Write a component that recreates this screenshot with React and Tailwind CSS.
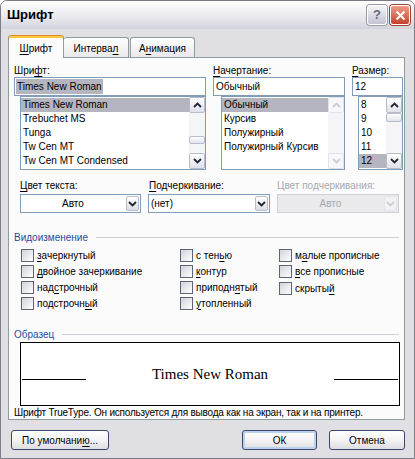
import React from "react";

// accelerator letter
function U({ children }) {
  return <span className="underline decoration-1 underline-offset-[2px]">{children}</span>;
}

function Arrow({ up, dim }) {
  return (
    <svg width="9" height="6" viewBox="0 0 9 6" className="block">
      <polyline
        points={up ? "1,5 4.5,1.5 8,5" : "1,1 4.5,4.5 8,1"}
        fill="none"
        stroke={dim ? "#cdcdd4" : "#23232e"}
        strokeWidth="1.8"
      />
    </svg>
  );
}

function ScrollBtn({ up, dim }) {
  return (
    <div
      className={`h-[16px] rounded-[2px] border flex items-center justify-center ${
        dim
          ? "border-[#e2e2ea] bg-[#f7f7f9]"
          : "border-[#b8bbca] bg-gradient-to-b from-white to-[#e0e0e9]"
      }`}
    >
      <Arrow up={up} dim={dim} />
    </div>
  );
}

function ScrollBar({ thumb, dim }) {
  return (
    <div className="w-[16px] flex flex-col bg-[#f5f5f8]">
      <ScrollBtn up dim={dim} />
      <div className="flex-1">
        {thumb === "mid" && (
          <div className="mt-[23px] h-[8px] rounded-[2px] border border-[#b8bbca] bg-gradient-to-b from-white to-[#e2e2ea]" />
        )}
        {thumb === "top" && (
          <div className="h-[9px] rounded-[2px] border border-[#b8bbca] bg-gradient-to-b from-white to-[#e2e2ea]" />
        )}
      </div>
      <ScrollBtn dim={dim} />
    </div>
  );
}

function ListBox({ items, selected, className, thumb, dim }) {
  return (
    <div className={`h-[74px] border border-[#7f9db9] bg-white flex overflow-hidden ${className}`}>
      <div className="flex-1 min-w-0 pt-px">
        {items.map((it, i) => (
          <div
            key={it}
            className={`h-[14px] leading-[14px] pl-[2px] whitespace-nowrap ${
              i === selected ? "bg-[#b5b5bf]" : ""
            }`}
          >
            {it}
          </div>
        ))}
      </div>
      <ScrollBar thumb={thumb} dim={dim} />
    </div>
  );
}

function Combo({ value, center, disabled, className }) {
  return (
    <div
      className={`h-[19px] border flex items-stretch ${
        disabled ? "border-[#cfcfd6] bg-[#eaeaed]" : "border-[#7f9db9] bg-white"
      } ${className}`}
    >
      <div
        className={`flex-1 flex items-center ${center ? "justify-center" : "pl-[2px]"} ${
          disabled ? "text-[#a8a8b0]" : ""
        }`}
      >
        {value}
      </div>
      <div className="w-[15px] p-px">
        <div
          className={`h-full rounded-[2px] border flex items-center justify-center ${
            disabled
              ? "border-[#e4e4ea] bg-[#f2f2f5]"
              : "border-[#b8bbca] bg-gradient-to-b from-white to-[#dcdce6]"
          }`}
        >
          <Arrow dim={disabled} />
        </div>
      </div>
    </div>
  );
}

function Check({ children }) {
  return (
    <div className="h-[16px] flex items-center">
      <div className="w-[13px] h-[13px] border border-[#5c6478] bg-gradient-to-br from-[#d4d4d9] to-white" />
      <span className="ml-[3px] whitespace-nowrap">{children}</span>
    </div>
  );
}

function Group({ title }) {
  return (
    <div className="flex items-center h-[13px] pl-[5px] pr-[5px]">
      <span className="text-[#1f4b9e] whitespace-nowrap">{title}</span>
      <div className="flex-1 h-px bg-[#d0d0d6] ml-[8px]" />
    </div>
  );
}

function Button({ children, def, className }) {
  return (
    <div
      className={`h-[20px] rounded-[3px] border border-[#3a4a66] bg-gradient-to-b from-white via-[#f4f4f6] to-[#dcdce2] flex items-center justify-center ${
        def ? "shadow-[inset_0_0_0_2px_#bcd0f0]" : ""
      } ${className}`}
    >
      {children}
    </div>
  );
}

export default function App() {
  return (
    <div className="w-[415px] h-[459px] overflow-hidden rounded-t-[7px] border border-[#7c7c88] bg-[#e0dfe3] font-['Liberation_Sans',Arial,sans-serif] text-[10px] text-black flex flex-col">
      {/* Title bar */}
      <div className="h-[28px] shrink-0 flex items-center pl-[6px] pr-[4px] bg-gradient-to-b from-white via-[#ececf0] to-[#d3d3dc]">
        <span className="font-bold text-[13px] flex-1">Шрифт</span>
        <div className="w-[20px] h-[20px] rounded-[3px] border border-white shadow-[0_0_0_1px_#9a9aa8] bg-gradient-to-b from-[#f4f4f8] to-[#c4c4d2] flex items-center justify-center text-[#6a6a80] font-bold text-[13px]">
          ?
        </div>
        <div className="ml-[3px] w-[20px] h-[20px] rounded-[3px] border border-white shadow-[0_0_0_1px_#a04030] bg-gradient-to-b from-[#ec9c88] to-[#c4402c] flex items-center justify-center">
          <svg width="11" height="11" viewBox="0 0 11 11">
            <path d="M1.5 1.5 L9.5 9.5 M9.5 1.5 L1.5 9.5" stroke="white" strokeWidth="2" />
          </svg>
        </div>
      </div>

      {/* Tabs */}
      <div className="mt-[6px] h-[23px] flex items-end pl-[7px]">
        <div className="relative z-10 h-[23px] w-[56px] rounded-t-[3px] border border-b-0 border-[#919b9c] border-t-[#e68b2c] bg-[#fbfbfc] shadow-[inset_0_2px_0_#ffc73c] flex items-center justify-center pt-[2px]">
          <span>
            <U>Ш</U>рифт
          </span>
        </div>
        <div className="h-[21px] w-[65px] rounded-t-[3px] border border-b-0 border-l-0 border-[#919b9c] bg-gradient-to-b from-white to-[#e8e8ec] flex items-center justify-center">
          <span>
            Интерва<U>л</U>
          </span>
        </div>
        <div className="ml-px h-[21px] w-[65px] rounded-t-[3px] border border-b-0 border-[#919b9c] bg-gradient-to-b from-white to-[#e8e8ec] flex items-center justify-center">
          <span>
            А<U>н</U>имация
          </span>
        </div>
      </div>

      {/* Panel */}
      <div className="-mt-px ml-[7px] w-[397px] h-[363px] border border-[#919b9c] bg-[#fbfbfc] flex flex-col">
        {/* font / style / size */}
        <div className="flex pt-[6px] pl-[5px]">
          <div className="w-[192px] flex flex-col">
            <div className="h-[13px] leading-[13px]">
              Шри<U>ф</U>т:
            </div>
            <div className="h-[19px] border border-[#7f9db9] bg-white flex items-stretch p-px">
              <span className="bg-[#b5b5bf] px-px flex items-center">Times New Roman</span>
            </div>
            <ListBox
              className="ml-[6px]"
              items={["Times New Roman", "Trebuchet MS", "Tunga", "Tw Cen MT", "Tw Cen MT Condensed"]}
              selected={0}
              thumb="mid"
            />
          </div>
          <div className="ml-[7px] w-[132px] flex flex-col">
            <div className="h-[13px] leading-[13px]">
              <U>Н</U>ачертание:
            </div>
            <div className="h-[19px] border border-[#7f9db9] bg-white flex items-center pl-[2px]">Обычный</div>
            <ListBox
              className="ml-[8px]"
              items={["Обычный", "Курсив", "Полужирный", "Полужирный Курсив"]}
              selected={0}
              dim
            />
          </div>
          <div className="ml-[7px] w-[51px] flex flex-col">
            <div className="h-[13px] leading-[13px]">
              <U>Р</U>азмер:
            </div>
            <div className="h-[19px] border border-[#7f9db9] bg-white flex items-center pl-[2px]">12</div>
            <ListBox className="ml-[6px]" items={["8", "9", "10", "11", "12"]} selected={4} thumb="top" />
          </div>
        </div>

        {/* colour / underline */}
        <div className="flex mt-[9px] pl-[11px]">
          <div className="w-[121px] flex flex-col">
            <div className="h-[13px] leading-[13px]">
              <U>Ц</U>вет текста:
            </div>
            <Combo className="mt-[2px]" value="Авто" center />
          </div>
          <div className="ml-[7px] w-[122px] flex flex-col">
            <div className="h-[13px] leading-[13px] pl-px">
              <U>П</U>одчеркивание:
            </div>
            <Combo className="mt-[2px]" value="(нет)" />
          </div>
          <div className="ml-[7px] w-[122px] flex flex-col">
            <div className="h-[13px] leading-[13px] text-[#a8a8b0]">Цвет подчеркивания:</div>
            <Combo className="mt-[2px]" value="Авто" center disabled />
          </div>
        </div>

        {/* effects */}
        <div className="mt-[18px]">
          <Group title="Видоизменение" />
        </div>
        <div className="mt-[3px] pl-[12px] flex">
          <div className="w-[159px] flex flex-col">
            <Check>
              <U>з</U>ачеркнутый
            </Check>
            <Check>
              <U>д</U>войное зачеркивание
            </Check>
            <Check>
              над<U>с</U>трочный
            </Check>
            <Check>
              подстрочн<U>ы</U>й
            </Check>
          </div>
          <div className="w-[99px] flex flex-col">
            <Check>
              с тен<U>ь</U>ю
            </Check>
            <Check>
              <U>к</U>онтур
            </Check>
            <Check>
              приподн<U>я</U>тый
            </Check>
            <Check>
              <U>у</U>топленный
            </Check>
          </div>
          <div className="flex flex-col">
            <Check>
              м<U>а</U>лые прописные
            </Check>
            <Check>
              <U>в</U>се прописные
            </Check>
            <div className="mt-px">
              <Check>
                скрыты<U>й</U>
              </Check>
            </div>
          </div>
        </div>

        {/* sample */}
        <div className="mt-[17px]">
          <Group title="Образец" />
        </div>
        <div className="mt-px ml-[11px] w-[380px] h-[65px] border border-black bg-white flex items-center px-px">
          <div className="w-full flex items-end h-[20px]">
            <div className="w-[64px] h-px bg-black mb-[4px]" />
            <div className="flex-1 text-center font-['Liberation_Serif',serif] text-[15px] leading-[20px]">
              Times New Roman
            </div>
            <div className="w-[64px] h-px bg-black mb-[4px]" />
          </div>
        </div>
        <div className="pl-[5px] h-[13px] leading-[13px] whitespace-nowrap tracking-[-0.2px]">
          Шрифт TrueType. Он используется для вывода как на экран, так и на принтер.
        </div>
      </div>

      {/* Buttons */}
      <div className="mt-[10px] flex pl-[10px]">
        <Button className="w-[98px]">
          <span>
            По умолчани<U>ю</U>...
          </span>
        </Button>
        <Button def className="ml-[133px] w-[75px]">
          ОК
        </Button>
        <Button className="ml-[12px] w-[76px]">Отмена</Button>
      </div>
    </div>
  );
}
